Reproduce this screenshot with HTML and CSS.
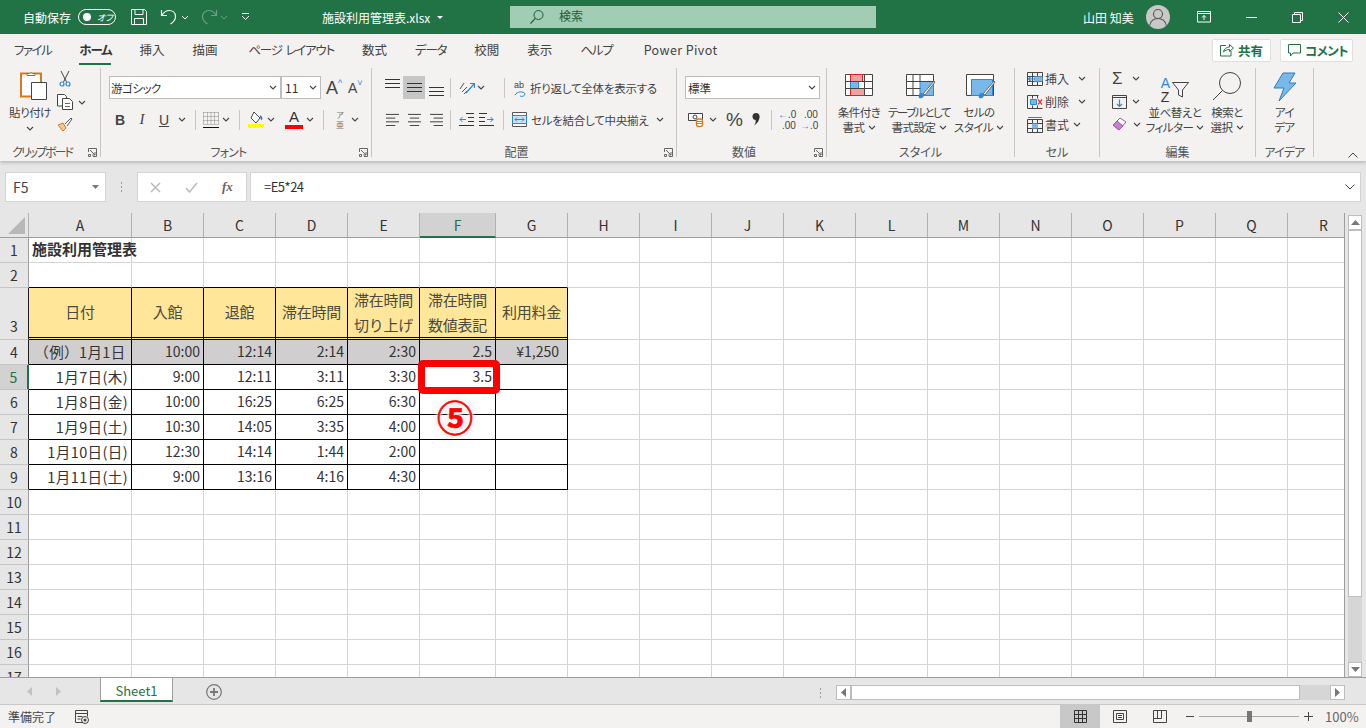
FILE: index.html
```html
<!DOCTYPE html>
<html lang="ja">
<head>
    <meta charset="UTF-8">
    <meta name="viewport" content="width=device-width, initial-scale=1.0">
    <title>施設利用管理表.xlsx - Excel</title>
    <link rel="stylesheet" href="styles.css">
</head>
<body>
    <svg class="defs" width="0" height="0">
        <symbol id="chev" viewBox="0 0 8 5"><path d="M1 1l3 3 3-3" fill="none" stroke="#444" stroke-width="1.1"/></symbol>
        <symbol id="launch" viewBox="0 0 9 9"><path d="M.5 4V.5h8v8H5M2 2l5 5M7 4v3H4M.5 6.500h2v2h-2z" fill="none" stroke="#666"/></symbol>
        <symbol id="lines-l" viewBox="0 0 16 14"><path d="M1 1.500h14M1 5.500h10M1 9.500h14M1 13.500h10" stroke="#333" fill="none"/></symbol>
        <symbol id="lines-c" viewBox="0 0 16 14"><path d="M1 1.500h14M3 5.500h10M1 9.500h14M3 13.500h10" stroke="#333" fill="none"/></symbol>
        <symbol id="lines-r" viewBox="0 0 16 14"><path d="M1 1.500h14M5 5.500h10M1 9.500h14M5 13.500h10" stroke="#333" fill="none"/></symbol>
    </svg>

    <!-- Title bar -->
    <header class="titlebar">
        <div class="qat">
            <span class="autosave">自動保存</span>
            <span class="toggle"><i></i><b>オフ</b></span>
            <svg class="qat-save" width="18" height="18" viewBox="0 0 18 18"><path d="M1.500 1.500h13l2 2v13h-15zM5 1.500v5h8v-5M4.500 16.500v-6h9v6" fill="none" stroke="#fff"/></svg>
            <svg class="qat-undo" width="18" height="18" viewBox="0 0 18 18"><path d="M1.500 2v5.500H7M2 7c2-3 4-4.500 7-4.500 4 0 6.500 2.500 6.500 6 0 3-2 5.500-5 7.500" fill="none" stroke="#fff" stroke-width="1.2"/></svg>
            <svg class="qat-chev" width="8" height="5"><path d="M1 1l3 3 3-3" fill="none" stroke="#fff"/></svg>
            <svg class="qat-redo" width="18" height="18" viewBox="0 0 18 18"><path d="M16.500 2v5.500H11M16 7c-2-3-4-4.500-7-4.500-4 0-6.500 2.500-6.500 6 0 3 2 5.500 5 7.500" fill="none" stroke="#6f9f88" stroke-width="1.2"/></svg>
            <svg class="qat-chev dim" width="8" height="5"><path d="M1 1l3 3 3-3" fill="none" stroke="#6f9f88"/></svg>
            <svg class="qat-more" width="9" height="8" viewBox="0 0 9 8"><path d="M1 .5h7M1 3l3.500 3.500L8 3" fill="none" stroke="#fff"/></svg>
        </div>
        <div class="filename">施設利用管理表.xlsx<svg width="6" height="3" viewBox="0 0 6 3"><path d="M0 0h6L3 3z" fill="#fff"/></svg></div>
        <div class="search">
            <svg width="16" height="16" viewBox="0 0 16 16"><circle cx="9.500" cy="6" r="4.500" fill="none" stroke="#1e5c3c"/><path d="M6.300 9.300L1.500 14.500" stroke="#1e5c3c" stroke-width="1.2"/></svg>
            <span>検索</span>
        </div>
        <div class="account">
            <span class="username">山田 知美</span>
            <span class="avatar"><svg width="24" height="24" viewBox="0 0 24 24"><circle cx="12" cy="9" r="4.500" fill="none" stroke="#555" stroke-width="1.1"/><path d="M3.500 21c1-5 4-7.500 8.500-7.500s7.500 2.500 8.500 7.500" fill="none" stroke="#555" stroke-width="1.1"/></svg></span>
        </div>
        <div class="winbtns">
            <svg width="14" height="12" viewBox="0 0 14 12"><path d="M.5 2.500V.5h13v10.500H.5zM.5 2.500h13M7 9V4.500M5 6.500l2-2 2 2" fill="none" stroke="#fff"/></svg>
            <svg width="11" height="1" viewBox="0 0 11 1"><path d="M0 .5h11" stroke="#fff"/></svg>
            <svg width="11" height="11" viewBox="0 0 11 11"><path d="M.5 2.500h8v8h-8zM2.500 2.500v-2h8v8h-2" fill="none" stroke="#fff"/></svg>
            <svg width="11" height="11" viewBox="0 0 11 11"><path d="M.5.5l10 10M10.500.5l-10 10" fill="none" stroke="#fff"/></svg>
        </div>
    </header>

    <!-- Tabs -->
    <nav class="tabs">
        <span class="kana wide">ファイル</span>
        <span class="kana active">ホーム</span>
        <span>挿入</span>
        <span>描画</span>
        <span class="kana page">ページ レイアウト</span>
        <span>数式</span>
        <span class="kana">データ</span>
        <span>校閲</span>
        <span>表示</span>
        <span class="kana">ヘルプ</span>
        <span class="latin">Power Pivot</span>
        <div class="share-btns">
            <button class="share">
                <svg width="14" height="14" viewBox="0 0 14 14"><path d="M6 2.500H.5V13H11V8M3.500 9c.5-3 3-5 6-5V1.500l4 3.500-4 3.500v-2c-2.500 0-4.500 1-6 2.500z" fill="none" stroke="#217346"/></svg>
                共有
            </button>
            <button class="share comment">
                <svg width="13" height="13" viewBox="0 0 13 13"><path d="M.5.5h12V9H5l-2.500 3V9h-2z" fill="none" stroke="#217346"/></svg>
                コメント
            </button>
        </div>
    </nav>

    <!-- Ribbon -->
    <section class="ribbon">
        <div class="group g-clip">
            <div class="group-body">
                <div class="paste">
                    <svg width="28" height="30" viewBox="0 0 28 30"><path d="M1 2.500h20v23H1z" fill="#fff" stroke="#d9791a" stroke-width="2"/><path d="M7 4.500v-2h2.500a2 2 0 0 1 3 0H15v2z" fill="#fff" stroke="#777"/><path d="M11.500 11.500h15v17h-15z" fill="#fff" stroke="#444"/></svg>
                    <span class="big-label">貼り付け</span>
                    <svg width="8" height="5"><use href="#chev"/></svg>
                </div>
                <div class="clip-col">
                    <svg width="12" height="17" viewBox="0 0 12 17"><path d="M2 1l5.500 11M10 1L4.500 12" fill="none" stroke="#444"/><circle cx="3" cy="14" r="2" fill="none" stroke="#2b88d8" stroke-width="1.2"/><circle cx="9" cy="14" r="2" fill="none" stroke="#2b88d8" stroke-width="1.2"/></svg>
                    <div class="clip-row">
                        <svg width="17" height="16" viewBox="0 0 17 16"><path d="M.5.5h7l2 2V12H.5z" fill="#fff" stroke="#444"/><path d="M5.500 4.500h7l3 3v8h-10z" fill="#fff" stroke="#444"/><path d="M8 9.500h5M8 12.500h5" stroke="#666"/></svg>
                        <svg width="8" height="5"><use href="#chev"/></svg>
                    </div>
                    <svg width="16" height="15" viewBox="0 0 16 15"><path d="M1 8l5 6 3-3-3-5z" fill="#f7c78c" stroke="#d9791a"/><path d="M8 7l6-6 1 1-5 7" fill="#fff" stroke="#555"/></svg>
                </div>
            </div>
            <div class="group-label">クリップボード</div>
            <svg class="launcher" width="9" height="9"><use href="#launch"/></svg>
        </div>

        <div class="group g-font">
            <div class="group-body column">
                <div class="tool-row">
                    <div class="select font-name">游ゴシック<svg width="8" height="5"><use href="#chev"/></svg></div>
                    <div class="select font-size">11<svg width="8" height="5"><use href="#chev"/></svg></div>
                    <span class="grow-a">A<sup>^</sup></span>
                    <span class="shrink-a">A<sup>˅</sup></span>
                </div>
                <div class="tool-row format-row">
                    <span class="fmt bold">B</span>
                    <span class="fmt italic">I</span>
                    <span class="fmt under">U</span>
                    <svg class="c" width="8" height="5"><use href="#chev"/></svg>
                    <i class="vsep s1"></i>
                    <svg class="ico-border" width="16" height="16" viewBox="0 0 16 16"><path d="M.5.5h15M.5 4.500h15M.5 8.500h15M.5 12.500h15M.5.5v12M4.500.5v12M8 .5v12M11.500.5v12M15.500.5v12" fill="none" stroke="#888" stroke-dasharray="1 1"/><path d="M0 15.500h16" stroke="#111"/></svg>
                    <svg class="c" width="8" height="5"><use href="#chev"/></svg>
                    <i class="vsep s2"></i>
                    <svg class="ico-fill" width="16" height="17" viewBox="0 0 16 17"><path d="M6 1l6 6-4 5-5-5z" fill="#fff" stroke="#444"/><path d="M12 4c2 1 3 3 2 5-1 0-2-2-2-5z" fill="#2b6cb0"/><path d="M0 13h16v4H0z" fill="#ff0"/></svg>
                    <svg class="c" width="8" height="5"><use href="#chev"/></svg>
                    <span class="ico-color">A<i></i></span>
                    <svg class="c" width="8" height="5"><use href="#chev"/></svg>
                    <i class="vsep s3"></i>
                    <span class="phonetic">ア<br>亜</span>
                    <svg class="c" width="8" height="5"><use href="#chev"/></svg>
                </div>
            </div>
            <div class="group-label kana-label">フォント</div>
            <svg class="launcher" width="9" height="9"><use href="#launch"/></svg>
        </div>

        <div class="group g-align">
            <div class="group-body column">
                <div class="tool-row">
                    <span class="al al-top"><svg width="15" height="9" viewBox="0 0 15 9"><path d="M0 .5h15M0 4.500h15M0 8.500h15" stroke="#333"/></svg></span>
                    <span class="al al-mid"><svg width="15" height="9" viewBox="0 0 15 9"><path d="M0 .5h15M0 4.500h15M0 8.500h15" stroke="#333"/></svg></span>
                    <span class="al al-bot"><svg width="15" height="9" viewBox="0 0 15 9"><path d="M0 .5h15M0 4.500h15M0 8.500h15" stroke="#333"/></svg></span>
                    <i class="vsep a1"></i>
                    <svg class="orient" width="16" height="14" viewBox="0 0 16 14"><path d="M1 8l4-6M3 11l5-5M5 13l3-3" stroke="#555" fill="none"/><path d="M7 12l8-9M11 2.500h4.500V7" stroke="#2b88d8" fill="none" stroke-width="1.2"/></svg>
                    <svg class="c" width="8" height="5"><use href="#chev"/></svg>
                    <i class="vsep a2"></i>
                    <svg class="ico-wrap" width="14" height="18" viewBox="0 0 14 18"><path d="M1 16c2-4 9-4 10-1 0 2-3 3-5 2" fill="none" stroke="#2b88d8"/><text x="0" y="9" class="ico-txt">ab</text></svg>
                    <span class="wrap-text">折り返して全体を表示する</span>
                </div>
                <div class="tool-row">
                    <span class="al"><svg width="15" height="13" viewBox="0 0 15 13"><use href="#lines-l"/></svg></span>
                    <span class="al"><svg width="15" height="13" viewBox="0 0 15 13"><use href="#lines-c"/></svg></span>
                    <span class="al"><svg width="15" height="13" viewBox="0 0 15 13"><use href="#lines-r"/></svg></span>
                    <i class="vsep a1"></i>
                    <svg class="indent-l" width="15" height="13" viewBox="0 0 15 13"><path d="M7 .5h8M9 4.500h6M9 8.500h6M0 12.500h15" stroke="#333"/><path d="M7 6.500H1M3.500 4L1 6.500 3.500 9" stroke="#2b88d8" fill="none"/></svg>
                    <svg class="indent-r" width="15" height="13" viewBox="0 0 15 13"><path d="M0 .5h8M0 4.500h6M0 8.500h6M0 12.500h15" stroke="#333"/><path d="M8 6.500h6M11.500 4L14 6.500 11.500 9" stroke="#2b88d8" fill="none"/></svg>
                    <i class="vsep a3"></i>
                    <svg class="ico-merge" width="15" height="15" viewBox="0 0 15 15"><path d="M.5.5h14v14H.5z" fill="#fff" stroke="#555"/><path d="M.5 3.500h14v8H.5z" fill="#cde3f5" stroke="#2b88d8"/><path d="M3 7.500h9M5 5.500l-2 2 2 2M10 5.500l2 2-2 2" stroke="#2b88d8" fill="none"/></svg>
                    <span class="merge-text">セルを結合して中央揃え</span>
                    <svg class="c" width="8" height="5"><use href="#chev"/></svg>
                </div>
            </div>
            <div class="group-label">配置</div>
            <svg class="launcher" width="9" height="9"><use href="#launch"/></svg>
        </div>

        <div class="group g-num">
            <div class="group-body column">
                <div class="tool-row">
                    <div class="select num-format">標準<svg width="8" height="5"><use href="#chev"/></svg></div>
                </div>
                <div class="tool-row num-row">
                    <svg class="ico-acct" width="16" height="15" viewBox="0 0 16 15"><path d="M.5 1.500h14v7H.5z" fill="#fff" stroke="#444"/><circle cx="7" cy="5" r="2" fill="none" stroke="#444"/><rect x="8.500" y="7" width="6" height="7.500" rx="2" fill="#fff" stroke="#d9791a" stroke-width="1.3"/><path d="M9 9.500h5M9 11.500h5" stroke="#d9791a"/></svg>
                    <svg class="c" width="8" height="5"><use href="#chev"/></svg>
                    <span class="pct">%</span>
                    <svg class="comma" width="8" height="13" viewBox="0 0 8 13"><circle cx="4" cy="3.500" r="3.500" fill="#333"/><path d="M7.500 3.500c0 4-2 7-5.500 9 1.500-2 2-4 1.500-6z" fill="#333"/></svg>
                    <i class="vsep n1"></i>
                    <span class="dec"><b>←</b>.0<br>.00</span>
                    <span class="dec d2">.00<br><b>→</b>.0</span>
                </div>
            </div>
            <div class="group-label">数値</div>
            <svg class="launcher" width="9" height="9"><use href="#launch"/></svg>
        </div>

        <div class="group g-style">
            <div class="group-body">
                <div class="big-btn w-cond">
                    <svg width="28" height="23" viewBox="0 0 28 23"><path d="M.5.5h27v21H.5z" fill="#fff" stroke="#444"/><path d="M5.500.5h12v7h-12zM5.500 14.500h14v7h-14z" fill="#f4a0a0" stroke="#d22"/><path d="M5.500 7.500h8v7h-8z" fill="#7ab8ea" stroke="#2b88d8"/><path d="M.5 7.500h27M.5 14.500h27M19.500.5v21" stroke="#444" fill="none"/></svg>
                    <span class="big-label">条件付き<br>書式<svg width="8" height="5"><use href="#chev"/></svg></span>
                </div>
                <div class="big-btn w-table">
                    <svg width="30" height="26" viewBox="0 0 30 26"><path d="M.5.5h27v21H.5z" fill="#fff" stroke="#444"/><path d="M14 7.500h13.500v14H14z" fill="#7ab8ea" stroke="#2b88d8"/><path d="M.5 7.500h27M.5 14.500h14M7 .5v21M14 .5v7" stroke="#444" fill="none"/><path d="M13 24c-1-3 1-5 3-5l2 2c0 2-2 4-5 3z" fill="#2b88d8"/><path d="M17 20L28 7l1 1-10 13z" fill="#fff" stroke="#666"/></svg>
                    <span class="big-label"><span class="squeeze">テーブルとして</span><br>書式設定<svg width="8" height="5"><use href="#chev"/></svg></span>
                </div>
                <div class="big-btn w-cell">
                    <svg width="30" height="26" viewBox="0 0 30 26"><path d="M.5.5h27v21H.5z" fill="#fff" stroke="#444"/><path d="M5.500 5.500h21v16h-21z" fill="#7ab8ea" stroke="#2b88d8"/><path d="M13 24c-1-3 1-5 3-5l2 2c0 2-2 4-5 3z" fill="#2b88d8"/><path d="M17 20L28 7l1 1-10 13z" fill="#fff" stroke="#666"/></svg>
                    <span class="big-label">セルの<br>スタイル<svg width="8" height="5"><use href="#chev"/></svg></span>
                </div>
            </div>
            <div class="group-label">スタイル</div>
        </div>

        <div class="group g-cells">
            <div class="group-body column tight">
                <div class="cell-row">
                    <svg width="16" height="14" viewBox="0 0 16 14"><path d="M.5.5h15v13H.5zM.5 4.500h15M.5 9.500h15M5.500.5v13M10.500.5v13" fill="none" stroke="#444"/><path d="M7 4.500h8.500v5H7z" fill="#7ab8ea"/><path d="M8 7H1.500M4 4.500L1.500 7 4 9.500" fill="none" stroke="#2b88d8" stroke-width="1.2"/></svg>
                    <span>挿入</span><svg width="8" height="5"><use href="#chev"/></svg>
                </div>
                <div class="cell-row">
                    <svg width="16" height="14" viewBox="0 0 16 14"><path d="M.5.5h11M.5 13.500h15M.5.5v13M5.500.5v3M5.500 10.500v3M10.500.5v3M10.500 10.500v3" fill="none" stroke="#444"/><path d="M3.500 4.500h6v5h-6z" fill="#7ab8ea" stroke="#2b88d8"/><path d="M11 4.500l4 5M15 4.500l-4 5" stroke="#e33" stroke-width="1.3"/></svg>
                    <span>削除</span><svg width="8" height="5"><use href="#chev"/></svg>
                </div>
                <div class="cell-row c3">
                    <svg width="16" height="16" viewBox="0 0 16 16"><path d="M.5 2.500h15v13H.5zM.5 6.500h15M.5 11.500h15M5.500 2.500v13M10.500 2.500v13" fill="none" stroke="#444"/><path d="M5 6.500h6v5H5z" fill="#7ab8ea"/><path d="M1 .5h14" stroke="#2b88d8"/></svg>
                    <span>書式</span><svg width="8" height="5"><use href="#chev"/></svg>
                </div>
            </div>
            <div class="group-label">セル</div>
        </div>

        <div class="group g-edit">
            <div class="group-body">
                <div class="edit-col">
                    <div class="edit-row"><span class="sigma">Σ</span><svg width="8" height="5"><use href="#chev"/></svg></div>
                    <div class="edit-row"><svg width="15" height="14" viewBox="0 0 15 14"><path d="M.5.5h14v13H.5zM.5 2.500h14" fill="none" stroke="#444"/><path d="M7.500 4.500v7M5 9l2.500 2.500L10 9" fill="none" stroke="#2b88d8" stroke-width="1.2"/></svg><svg width="8" height="5"><use href="#chev"/></svg></div>
                    <div class="edit-row"><svg width="16" height="15" viewBox="0 0 16 15"><path d="M1 8l7-7 6 4-7 8z" fill="#fff" stroke="#a94fb5"/><path d="M1 8l4-4 6 5-4 4z" fill="#c77fd0" stroke="#a94fb5"/></svg><svg width="8" height="5"><use href="#chev"/></svg></div>
                </div>
                <div class="big-btn w-sort">
                    <span class="sort-ico"><b class="az"><i>A</i><i>Z</i></b><svg width="17" height="16" viewBox="0 0 17 16"><path d="M.5.5h16l-6 7.500v7l-4-2V8z" fill="none" stroke="#444"/></svg></span>
                    <span class="big-label">並べ替えと<br>フィルター<svg width="8" height="5"><use href="#chev"/></svg></span>
                </div>
                <div class="big-btn w-find">
                    <svg width="30" height="30" viewBox="0 0 30 30"><circle cx="18" cy="12" r="10.500" fill="none" stroke="#444"/><path d="M10.500 19.500L1 29" stroke="#444"/></svg>
                    <span class="big-label">検索と<br>選択<svg width="8" height="5"><use href="#chev"/></svg></span>
                </div>
            </div>
            <div class="group-label">編集</div>
        </div>

        <div class="group g-idea">
            <div class="group-body">
                <div class="big-btn w-idea">
                    <svg width="24" height="30" viewBox="0 0 24 30"><path d="M10 1h12l-6 10h7L6 29l5-13H1z" fill="#7ab8ea" stroke="#2b7cc4"/></svg>
                    <span class="big-label">アイ<br>デア</span>
                </div>
            </div>
            <div class="group-label kana-label">アイデア</div>
        </div>

        <svg class="collapse" width="10" height="6" viewBox="0 0 10 6"><path d="M.5 5.500L5 1l4.500 4.500" fill="none" stroke="#444"/></svg>
    </section>

    <!-- Formula bar -->
    <section class="formula-bar">
        <div class="name-box">F5<svg width="7" height="4" viewBox="0 0 7 4"><path d="M0 0h7L3.500 4z" fill="#777"/></svg></div>
        <div class="dots"></div>
        <div class="fx-box">
            <svg width="11" height="11" viewBox="0 0 11 11"><path d="M1 1l9 9M10 1l-9 9" stroke="#bbb" stroke-width="1.5"/></svg>
            <svg width="13" height="11" viewBox="0 0 13 11"><path d="M1 6l3.500 4L12 1" fill="none" stroke="#bbb" stroke-width="1.5"/></svg>
            <span class="fx">fx</span>
        </div>
        <div class="formula-input">=E5*24<svg width="10" height="6" viewBox="0 0 10 6"><path d="M.5.5L5 5l4.500-4.500" fill="none" stroke="#444"/></svg></div>
    </section>

    <!-- Sheet -->
    <main class="sheet">
        <div class="grid-wrap">
            <table class="grid">
                <colgroup>
                    <col class="c-head"><col class="c-a"><col><col><col><col><col class="c-f"><col>
                    <col><col><col><col><col><col><col><col><col><col><col>
                </colgroup>
                <thead>
                    <tr>
                        <th class="corner"><i></i></th>
                        <th>A</th><th>B</th><th>C</th><th>D</th><th>E</th><th class="sel-col">F</th><th>G</th><th>H</th><th>I</th><th>J</th><th>K</th><th>L</th><th>M</th><th>N</th><th>O</th><th>P</th><th>Q</th><th>R</th>
                    </tr>
                </thead>
                <tbody>
                    <tr>
                        <th>1</th>
                        <td class="sheet-title">施設利用管理表</td><td></td><td></td><td></td><td></td><td></td><td></td><td></td><td></td><td></td><td></td><td></td><td></td><td></td><td></td><td></td><td></td><td></td>
                    </tr>
                    <tr>
                        <th>2</th>
                        <td class="bb"></td><td class="bb"></td><td class="bb"></td><td class="bb"></td><td class="bb"></td><td class="bb"></td><td class="bb"></td><td></td><td></td><td></td><td></td><td></td><td></td><td></td><td></td><td></td><td></td><td></td>
                    </tr>
                    <tr class="row-head">
                        <th class="bk">3</th>
                        <td class="hd">日付</td><td class="hd">入館</td><td class="hd">退館</td><td class="hd">滞在時間</td><td class="hd">滞在時間<br>切り上げ</td><td class="hd">滞在時間<br>数値表記</td><td class="hd">利用料金</td><td></td><td></td><td></td><td></td><td></td><td></td><td></td><td></td><td></td><td></td><td></td>
                    </tr>
                    <tr class="row-ex">
                        <th class="bk">4</th>
                        <td class="ex date mid">（例）1月1日</td><td class="ex n">10:00</td><td class="ex n">12:14</td><td class="ex n">2:14</td><td class="ex n">2:30</td><td class="ex n">2.5</td><td class="ex n yen">¥1,250</td><td></td><td></td><td></td><td></td><td></td><td></td><td></td><td></td><td></td><td></td><td></td>
                    </tr>
                    <tr>
                        <th class="sel-row">5</th>
                        <td class="d n date">1月7日(木)</td><td class="d n">9:00</td><td class="d n">12:11</td><td class="d n">3:11</td><td class="d n">3:30</td><td class="d n">3.5</td><td class="d"></td><td></td><td></td><td></td><td></td><td></td><td></td><td></td><td></td><td></td><td></td><td></td>
                    </tr>
                    <tr>
                        <th class="bk">6</th>
                        <td class="d n date">1月8日(金)</td><td class="d n">10:00</td><td class="d n">16:25</td><td class="d n">6:25</td><td class="d n">6:30</td><td class="d"></td><td class="d"></td><td></td><td></td><td></td><td></td><td></td><td></td><td></td><td></td><td></td><td></td><td></td>
                    </tr>
                    <tr>
                        <th class="bk">7</th>
                        <td class="d n date">1月9日(土)</td><td class="d n">10:30</td><td class="d n">14:05</td><td class="d n">3:35</td><td class="d n">4:00</td><td class="d"></td><td class="d"></td><td></td><td></td><td></td><td></td><td></td><td></td><td></td><td></td><td></td><td></td><td></td>
                    </tr>
                    <tr>
                        <th class="bk">8</th>
                        <td class="d n date">1月10日(日)</td><td class="d n">12:30</td><td class="d n">14:14</td><td class="d n">1:44</td><td class="d n">2:00</td><td class="d"></td><td class="d"></td><td></td><td></td><td></td><td></td><td></td><td></td><td></td><td></td><td></td><td></td><td></td>
                    </tr>
                    <tr>
                        <th class="bk">9</th>
                        <td class="d n date">1月11日(土)</td><td class="d n">9:00</td><td class="d n">13:16</td><td class="d n">4:16</td><td class="d n">4:30</td><td class="d"></td><td class="d"></td><td></td><td></td><td></td><td></td><td></td><td></td><td></td><td></td><td></td><td></td><td></td>
                    </tr>
                    <tr><th>10</th><td></td><td></td><td></td><td></td><td></td><td></td><td></td><td></td><td></td><td></td><td></td><td></td><td></td><td></td><td></td><td></td><td></td><td></td></tr>
                    <tr><th>11</th><td></td><td></td><td></td><td></td><td></td><td></td><td></td><td></td><td></td><td></td><td></td><td></td><td></td><td></td><td></td><td></td><td></td><td></td></tr>
                    <tr><th>12</th><td></td><td></td><td></td><td></td><td></td><td></td><td></td><td></td><td></td><td></td><td></td><td></td><td></td><td></td><td></td><td></td><td></td><td></td></tr>
                    <tr><th>13</th><td></td><td></td><td></td><td></td><td></td><td></td><td></td><td></td><td></td><td></td><td></td><td></td><td></td><td></td><td></td><td></td><td></td><td></td></tr>
                    <tr><th>14</th><td></td><td></td><td></td><td></td><td></td><td></td><td></td><td></td><td></td><td></td><td></td><td></td><td></td><td></td><td></td><td></td><td></td><td></td></tr>
                    <tr><th>15</th><td></td><td></td><td></td><td></td><td></td><td></td><td></td><td></td><td></td><td></td><td></td><td></td><td></td><td></td><td></td><td></td><td></td><td></td></tr>
                    <tr><th>16</th><td></td><td></td><td></td><td></td><td></td><td></td><td></td><td></td><td></td><td></td><td></td><td></td><td></td><td></td><td></td><td></td><td></td><td></td></tr>
                    <tr><th>17</th><td></td><td></td><td></td><td></td><td></td><td></td><td></td><td></td><td></td><td></td><td></td><td></td><td></td><td></td><td></td><td></td><td></td><td></td></tr>
                </tbody>
            </table>
            <div class="red-box"></div>
            <div class="step-no">⑤</div>
        </div>
        <div class="vscroll">
            <span class="sb-btn"><svg width="9" height="5" viewBox="0 0 9 5"><path d="M0 5h9L4.500 0z" fill="#777"/></svg></span>
            <span class="sb-thumb"></span>
            <span class="sb-rest"></span>
            <span class="sb-btn"><svg width="9" height="5" viewBox="0 0 9 5"><path d="M0 0h9L4.500 5z" fill="#777"/></svg></span>
        </div>
    </main>

    <!-- Sheet tabs -->
    <section class="tabbar">
        <div class="tab-nav">
            <svg width="5" height="9" viewBox="0 0 5 9"><path d="M5 0v9L0 4.500z" fill="#c2c2c2"/></svg>
            <svg width="5" height="9" viewBox="0 0 5 9"><path d="M0 0v9l5-4.500z" fill="#c2c2c2"/></svg>
        </div>
        <div class="sheet-tab">Sheet1</div>
        <svg class="add-sheet" width="16" height="16" viewBox="0 0 16 16"><circle cx="8" cy="8" r="7.300" fill="none" stroke="#777" stroke-width="1.2"/><path d="M8 4v8M4 8h8" stroke="#777" stroke-width="1.8"/></svg>
        <div class="hscroll">
            <span class="dots h"></span>
            <span class="sb-btn"><svg width="5" height="9" viewBox="0 0 5 9"><path d="M5 0v9L0 4.500z" fill="#777"/></svg></span>
            <span class="h-thumb"></span>
            <span class="h-rest"></span>
            <span class="sb-btn"><svg width="5" height="9" viewBox="0 0 5 9"><path d="M0 0v9l5-4.500z" fill="#777"/></svg></span>
        </div>
    </section>

    <!-- Status bar -->
    <footer class="statusbar">
        <span class="ready">準備完了</span>
        <svg class="macro" width="14" height="14" viewBox="0 0 14 14"><path d="M8 12.500H.5V.5h12v6M.5 3.500h12M2.500 6.500h5M2.500 9h3" fill="none" stroke="#444"/><circle cx="10" cy="10" r="3.500" fill="none" stroke="#444"/><circle cx="10" cy="10" r="1.500" fill="#444"/></svg>
        <div class="views">
            <span class="view on"><svg width="13" height="13" viewBox="0 0 13 13"><path d="M.5.5h12v12H.5zM4.500.5v12M8.500.5v12M.5 4.500h12M.5 8.500h12" fill="none" stroke="#333"/></svg></span>
            <span class="view"><svg width="14" height="13" viewBox="0 0 14 13"><path d="M.5.5h13v12H.5zM3.500 3.500h7v6h-7zM5 5.500h4M5 7.500h4" fill="none" stroke="#444"/></svg></span>
            <span class="view"><svg width="14" height="13" viewBox="0 0 14 13"><path d="M.5 8.500V.5h13v12H.5v-4h8V.5M4.500.5v8" fill="none" stroke="#444"/></svg></span>
        </div>
        <div class="zoom">
            <i class="minus"></i>
            <span class="slider"><b></b></span>
            <i class="plus"></i>
            <span class="pct-text">100%</span>
        </div>
    </footer>
</body>
</html>
```

FILE: styles.css
```css
* {
    box-sizing: border-box;
}
html, body {
    height: 100%;
}
body {
    margin: 0;
    width: 1366px;
    height: 728px;
    overflow: hidden;
    display: flex;
    flex-direction: column;
    background-color: #e6e6e6;
    color: #333;
    font-family: "Noto Sans CJK JP", "Noto Sans", sans-serif;
    font-size: 12px;
    font-feature-settings: "palt";
}
.defs {
    position: absolute;
}
svg {
    flex: none;
}
i {
    font-style: normal;
}

/* title bar */
.titlebar {
    height: 34px;
    flex: none;
    display: flex;
    align-items: center;
    background-color: #217346;
    color: #fff;
    position: relative;
}
.qat {
    display: flex;
    align-items: center;
    width: 322px;
    padding-left: 23px;
}
.autosave {
    font-size: 12px;
    width: 55px;
}
.toggle {
    width: 38px;
    height: 16px;
    border: 1px solid #fff;
    border-radius: 8px;
    display: flex;
    align-items: center;
    padding-left: 4px;
}
.toggle i {
    width: 8px;
    height: 8px;
    background-color: #fff;
    border-radius: 50%;
}
.toggle b {
    font-size: 9px;
    font-weight: 400;
    font-style: italic;
    margin-left: 6px;
}
.qat-save {
    margin-left: 14px;
}
.qat-undo {
    margin-left: 12px;
}
.qat-chev {
    margin-left: 3px;
}
.qat-redo {
    margin-left: 11px;
}
.qat-chev.dim {
    margin-left: 2px;
}
.qat-more {
    margin-left: 13px;
}
.filename {
    width: 188px;
    font-size: 12px;
    display: flex;
    align-items: center;
    gap: 7px;
    white-space: nowrap;
}
.search {
    width: 366px;
    height: 22px;
    background-color: #a0cdb4;
    color: #1e5c3c;
    display: flex;
    align-items: center;
    padding-left: 19px;
    gap: 14px;
    font-size: 12px;
    line-height: 20px;
}
.search span {
    margin-top: -2px;
}
.account {
    margin-left: 207px;
    display: flex;
    align-items: center;
    gap: 12px;
}
.username {
    font-size: 12px;
}
.avatar {
    width: 24px;
    height: 24px;
    background-color: #c8c8c8;
    border-radius: 50%;
    overflow: hidden;
}
.winbtns {
    display: flex;
    align-items: center;
    margin-left: 27px;
}
.winbtns svg + svg {
    margin-left: 35px;
}

/* tabs */
.tabs {
    height: 32px;
    flex: none;
    display: flex;
    align-items: center;
    background-color: #f3f2f1;
    padding-left: 14px;
    gap: 28px;
    font-size: 12.5px;
    color: #444;
    position: relative;
}
.tabs > span {
    white-space: nowrap;
    position: relative;
    line-height: 30px;
}
.tabs .kana {
    letter-spacing: -1.2px;
}
.tabs .kana.wide {
    letter-spacing: -1.5px;
}
.tabs .page {
    margin-left: 3px;
    word-spacing: 2px;
}
.tabs .latin {
    letter-spacing: .4px;
    margin-left: 3px;
}
.tabs .active {
    font-weight: 700;
    color: #333;
}
.tabs .active::after {
    content: "";
    position: absolute;
    left: 0;
    right: 0;
    bottom: 0;
    height: 2px;
    background-color: #217346;
}
.share-btns {
    margin-left: auto;
    display: flex;
    gap: 9px;
    padding-right: 13px;
}
.share {
    height: 23px;
    width: 59px;
    background-color: #fff;
    border: 1px solid #e1dfdd;
    border-radius: 2px;
    color: #217346;
    font-family: inherit;
    font-feature-settings: inherit;
    font-size: 12.5px;
    font-weight: 700;
    display: flex;
    align-items: center;
    gap: 4px;
    padding: 0 0 0 7px;
    white-space: nowrap;
}
.comment {
    width: 73px;
    letter-spacing: -.6px;
}

/* ribbon */
.ribbon {
    height: 95px;
    flex: none;
    display: flex;
    background-color: #f3f2f1;
    position: relative;
    padding-top: 2px;
    box-shadow: 0 2px 3px rgba(0, 0, 0, .18);
    z-index: 1;
}
.group {
    position: relative;
    height: 89px;
    border-right: 1px solid #c8c6c4;
    display: flex;
    flex-direction: column;
    flex: none;
}
.group-body {
    flex: 1;
    display: flex;
    min-height: 0;
}
.group-body.column {
    flex-direction: column;
    padding-top: 8px;
}
.group-label {
    height: 10px;
    line-height: 10px;
    text-align: center;
    font-size: 12px;
    color: #555;
    white-space: nowrap;
}
.kana-label {
    letter-spacing: -.8px;
}
.g-font .group-label, .g-align .group-label, .g-num .group-label {
    padding-right: 15px;
}
.g-clip .group-label {
    text-align: left;
    padding-left: 12px;
    letter-spacing: -2px;
}
.launcher {
    position: absolute;
    right: 3px;
    bottom: 0;
}
.big-label {
    font-size: 11.5px;
    line-height: 15px;
    letter-spacing: -.5px;
    text-align: center;
    white-space: nowrap;
    color: #444;
}
.big-label svg {
    margin-left: 3px;
    vertical-align: 2px;
}
.squeeze {
    letter-spacing: -1.4px;
}
.tool-row {
    display: flex;
    align-items: center;
    height: 23px;
}
.g-clip {
    width: 101px;
}
.g-font {
    width: 271px;
}
.g-align {
    width: 305px;
}
.g-num {
    width: 150px;
}
.g-style {
    width: 188px;
}
.g-cells {
    width: 85px;
}
.g-edit {
    width: 156px;
}
.g-idea {
    width: 58px;
}
.paste {
    width: 62px;
    display: flex;
    flex-direction: column;
    align-items: center;
    padding-top: 3px;
    padding-right: 2px;
}
.paste > svg:first-child {
    margin-left: 7px;
}
.paste .big-label {
    margin-top: 4px;
    margin-bottom: 6px;
}
.clip-col {
    display: flex;
    flex-direction: column;
    align-items: flex-start;
    gap: 7px;
    padding-top: 2px;
    margin-left: -5px;
}
.clip-col > svg:first-child {
    margin-left: 2px;
}
.clip-row {
    display: flex;
    align-items: center;
    gap: 4px;
}
.select {
    height: 23px;
    background-color: #fff;
    border: 1px solid #bdbdbd;
    display: flex;
    align-items: center;
    justify-content: space-between;
    padding: 0 3px 0 2px;
    font-size: 11.5px;
    color: #333;
}
.font-name {
    width: 172px;
    margin-left: 8px;
    padding: 0 3px 0 1px;
    letter-spacing: -.5px;
}
.font-size {
    width: 40px;
    font-size: 12px;
    padding-left: 3px;
}
.grow-a, .shrink-a {
    font-size: 18px;
    line-height: 22px;
    color: #444;
    margin-left: 5px;
    font-family: "Liberation Sans", sans-serif;
    display: flex;
    width: 19px;
}
.shrink-a {
    font-size: 14px;
    margin-left: 3px;
}
.grow-a sup, .shrink-a sup {
    font-size: 9px;
    line-height: 12px;
    color: #2b88d8;
}
.format-row {
    margin-top: 9px;
    padding-left: 8px;
}
.format-row .c {
    margin-left: 3px;
}
.fmt {
    width: 22px;
    text-align: center;
    font-size: 15px;
    color: #444;
    font-family: "Liberation Serif", serif;
}
.bold {
    font-weight: 700;
    font-family: "Liberation Sans", sans-serif;
    font-size: 14px;
}
.italic {
    font-style: italic;
}
.under {
    text-decoration: underline;
    font-family: "Liberation Sans", sans-serif;
    font-size: 14px;
}
.vsep {
    width: 1px;
    height: 20px;
    background-color: #c8c6c4;
    flex: none;
}
.s1 {
    margin: 0 7px 0 9px;
}
.s2 {
    margin: 0 8px 0 9px;
}
.s3 {
    margin: 0 8px 0 9px;
}
.ico-color {
    width: 18px;
    margin-left: 10px;
    font-family: "Liberation Sans", sans-serif;
    font-size: 15px;
    line-height: 14px;
    text-align: center;
    display: block;
}
.ico-color i {
    display: block;
    height: 4px;
    background-color: #f00;
    margin-top: 1px;
}
.phonetic {
    width: 16px;
    font-size: 8px;
    line-height: 10px;
    text-align: center;
    color: #777;
}
.al {
    width: 22px;
    height: 23px;
    display: flex;
    justify-content: center;
    align-items: center;
}
.g-align .tool-row {
    padding-left: 9px;
}
.g-align .tool-row + .tool-row {
    margin-top: 9px;
}
.al-top {
    align-items: flex-start;
    padding-top: 3px;
}
.al-mid {
    background-color: #c6c6c6;
}
.al-bot {
    align-items: flex-end;
    padding-bottom: 3px;
}
.a1 {
    margin: 0 8px 0 3px;
}
.a2 {
    margin: 0 9px 0 19px;
}
.a3 {
    margin: 0 8px 0 9px;
}
.orient + .c {
    margin-left: 2px;
}
.indent-r {
    margin-left: 5px;
}
.ico-txt {
    font-family: "Liberation Sans", sans-serif;
    font-size: 9px;
    fill: #444;
}
.wrap-text, .merge-text {
    font-size: 11.5px;
    margin-left: 2px;
    letter-spacing: -.25px;
    white-space: nowrap;
    color: #444;
}
.merge-text {
    margin-left: 4px;
    width: 122px;
}
.merge-text + .c {
    margin-left: 3px;
}
.num-format {
    width: 135px;
    margin-left: 8px;
}
.num-row {
    margin-top: 9px;
    padding-left: 11px;
}
.num-row .c {
    margin-left: 5px;
}
.pct {
    font-family: "Liberation Sans", sans-serif;
    font-size: 19px;
    margin-left: 9px;
    color: #444;
}
.comma {
    margin-left: 9px;
}
.n1 {
    margin: 0 6px 0 11px;
}
.dec {
    font-family: "Liberation Sans", sans-serif;
    font-size: 10px;
    line-height: 11px;
    width: 18px;
    text-align: right;
    color: #444;
    white-space: nowrap;
}
.dec b {
    color: #2b88d8;
    font-weight: 400;
}
.d2 {
    margin-left: 4px;
}
.big-btn {
    display: flex;
    flex-direction: column;
    align-items: center;
    justify-content: flex-start;
    padding-top: 6px;
}
.w-cond {
    width: 60px;
    margin-left: 2px;
}
.w-cond .big-label {
    margin-top: 8px;
}
.w-table, .w-cell {
    width: 60px;
}
.w-table svg:first-child, .w-cell svg:first-child {
    margin-left: 3px;
}
.w-table .big-label, .w-cell .big-label {
    margin-top: 5px;
}
.group-body.tight {
    padding-top: 0;
    margin-top: -1px;
}
.cell-row {
    display: flex;
    align-items: center;
    height: 23px;
    padding-left: 12px;
    font-size: 12px;
    color: #444;
}
.cell-row span {
    margin-left: 2px;
    width: 33px;
}
.c3 span {
    width: 28px;
}
.edit-col {
    width: 48px;
    margin-top: -1px;
    padding: 0 0 0 12px;
    display: flex;
    flex-direction: column;
}
.edit-row {
    height: 23px;
    display: flex;
    align-items: center;
    gap: 5px;
    width: 40px;
}
.sigma {
    font-family: "Liberation Sans", sans-serif;
    font-size: 17px;
    width: 15px;
    color: #444;
}
.w-sort {
    width: 56px;
    margin-left: -1px;
}
.w-sort .big-label {
    margin-top: 1px;
}
.sort-ico {
    display: flex;
    height: 30px;
    align-items: flex-end;
    gap: 2px;
}
.sort-ico svg {
    margin-bottom: 6px;
}
.az {
    display: flex;
    flex-direction: column;
    font-family: "Liberation Sans", sans-serif;
    font-weight: 400;
    font-size: 14px;
    line-height: 14px;
}
.az i:first-child {
    color: #2b88d8;
}
.w-find {
    width: 48px;
    padding-top: 3px;
}
.w-find .big-label {
    margin-top: 4px;
}
.w-idea {
    width: 58px;
    padding-top: 4px;
}
.w-idea .big-label {
    margin-top: 3px;
}
.collapse {
    position: absolute;
    right: 8px;
    bottom: 3px;
}

/* formula bar */
.formula-bar {
    height: 52px;
    flex: none;
    display: flex;
    align-items: flex-start;
    padding: 11px 5px 0;
    background-color: #e6e6e6;
}
.name-box, .fx-box, .formula-input {
    height: 30px;
    background-color: #fff;
    border: 1px solid #d4d4d4;
    display: flex;
    align-items: center;
}
.name-box {
    width: 101px;
    justify-content: space-between;
    padding: 0 6px 0 7px;
    font-size: 14px;
    color: #444;
}
.dots {
    width: 31px;
    height: 10px;
    margin-top: 10px;
    background-image: radial-gradient(#9a9a9a 1px, transparent 1px);
    background-size: 3px 4px;
    background-position: center;
    background-repeat: repeat-y;
}
.fx-box {
    width: 110px;
    padding-left: 12px;
    gap: 24px;
}
.fx {
    font-family: "Liberation Serif", serif;
    font-style: italic;
    font-weight: 700;
    font-size: 13px;
    color: #666;
}
.formula-input {
    flex: 1;
    margin-left: 3px;
    padding: 0 5px 2px 13px;
    justify-content: space-between;
    font-size: 13px;
    letter-spacing: -.5px;
    color: #333;
}
.formula-input svg {
    margin-top: 2px;
}

/* sheet */
.sheet {
    flex: none;
    height: 465px;
    display: flex;
    background-color: #fff;
    border-bottom: 1px solid #9e9e9e;
}
.grid-wrap {
    width: 1345px;
    height: 464px;
    overflow: hidden;
    position: relative;
    border-right: 1px solid #9e9e9e;
}
.grid {
    table-layout: fixed;
    border-collapse: separate;
    border-spacing: 0;
    width: 1344px;
    font-size: 14px;
    color: #333;
    font-feature-settings: normal;
}
.grid col {
    width: 72px;
}
.grid col.c-head {
    width: 29px;
}
.grid col.c-a {
    width: 103px;
}
.grid col.c-f {
    width: 76px;
}
.grid tr {
    height: 25px;
}
.grid thead th {
    background-color: #e6e6e6;
    border-right: 1px solid #b1b1b1;
    border-bottom: 1px solid #9e9e9e;
    font-weight: 400;
    font-size: 14px;
    color: #333;
    padding: 0;
    line-height: 20px;
}
.grid .corner {
    position: relative;
}
.corner i {
    position: absolute;
    right: 3px;
    bottom: 3px;
    border-left: 17px solid transparent;
    border-bottom: 17px solid #b8b8b8;
}
.grid thead th.sel-col {
    background-color: #d2d2d2;
    color: #217346;
    border-bottom: 2px solid #217346;
}
.grid tbody th {
    background-color: #e6e6e6;
    border-right: 1px solid #9e9e9e;
    border-bottom: 1px solid #c4c4c4;
    font-weight: 400;
    font-size: 14px;
    color: #333;
    padding: 0;
}
.grid tbody th.bk {
    border-right-color: #222;
}
.grid .row-head th {
    vertical-align: bottom;
    padding-bottom: 3px;
}
.grid tbody th.sel-row {
    background-color: #d2d2d2;
    color: #217346;
    border-right: 2px solid #217346;
}
.grid td {
    border-right: 1px solid #d4d4d4;
    border-bottom: 1px solid #d4d4d4;
    padding: 0 3px;
    white-space: nowrap;
    overflow: hidden;
}
.grid td.sheet-title {
    font-weight: 700;
    font-size: 15px;
    overflow: visible;
    padding-bottom: 3px;
}
.grid td.bb {
    border-bottom-color: #000;
}
.grid .row-head {
    height: 52px;
}
.grid td.hd {
    background-color: #ffe699;
    border-right-color: #000;
    border-bottom: 3px double #000;
    text-align: center;
    font-size: 15px;
    color: #4a4a40;
    line-height: 24.5px;
    padding: 0;
    letter-spacing: -.2px;
}
.grid td.ex {
    background-color: #d0cece;
    border-right-color: #000;
    border-bottom-color: #000;
    padding-bottom: 2px;
}
.grid td.d {
    border-right-color: #000;
    border-bottom-color: #000;
    padding-bottom: 2px;
}
.grid td.n {
    text-align: right;
}
.grid td.mid {
    text-align: center;
}
.grid td.date {
    font-size: 14.5px;
    letter-spacing: .4px;
}
.grid td.yen {
    padding-right: 8px;
}
.red-box {
    position: absolute;
    left: 418px;
    top: 147px;
    width: 82px;
    height: 34px;
    border: 7px solid #f00;
    border-radius: 5px;
}
.step-no {
    position: absolute;
    left: 431px;
    top: 178px;
    width: 48px;
    height: 52px;
    line-height: 50px;
    text-align: center;
    font-size: 36px;
    font-weight: 700;
    color: #f00;
    -webkit-text-stroke: .7px #f00;
    text-shadow: 0 0 3px #fff, 0 0 3px #fff, 0 0 4px #fff, 0 0 5px #fff, 0 0 6px rgba(0, 0, 0, .3);
}

/* scroll bars */
.vscroll {
    width: 21px;
    display: flex;
    flex-direction: column;
    background-color: #e6e6e6;
    padding: 2px 4px 0 3px;
}
.sb-btn {
    height: 15px;
    flex: none;
    background-color: #fff;
    border: 1px solid #bdbdbd;
    display: flex;
    align-items: center;
    justify-content: center;
}
.sb-thumb {
    height: 367px;
    background-color: #fff;
    border: 1px solid #bdbdbd;
}
.sb-rest {
    flex: 1;
    background-color: #d6d6d6;
}

/* sheet tab bar */
.tabbar {
    height: 27px;
    flex: none;
    display: flex;
    align-items: flex-start;
    background-color: #e6e6e6;
    border-bottom: 1px solid #c8c8c8;
}
.tab-nav {
    width: 100px;
    height: 26px;
    display: flex;
    align-items: center;
    padding-left: 27px;
    gap: 24px;
}
.sheet-tab {
    width: 73px;
    height: 24px;
    background-color: #fff;
    border: 1px solid #9e9e9e;
    border-top: none;
    border-bottom: 2px solid #217346;
    text-align: center;
    padding-top: 2px;
    line-height: 22px;
    font-size: 13px;
    color: #217346;
}
.add-sheet {
    margin: 6px 0 0 33px;
}
.hscroll {
    margin-left: auto;
    width: 541px;
    height: 15px;
    margin-top: 7px;
    margin-right: 21px;
    display: flex;
}
.hscroll .sb-btn {
    width: 15px;
    height: 15px;
}
.dots.h {
    width: 32px;
    height: 10px;
    margin-top: 3px;
}
.h-thumb {
    width: 449px;
    background-color: #fff;
    border: 1px solid #bdbdbd;
}
.h-rest {
    flex: 1;
    background-color: #d6d6d6;
}

/* status bar */
.statusbar {
    flex: 1;
    display: flex;
    align-items: center;
    background-color: #f3f2f1;
    font-size: 12px;
    color: #444;
}
.ready {
    margin-left: 8px;
    width: 67px;
}
.views {
    margin-left: auto;
    display: flex;
    height: 100%;
}
.view {
    width: 40px;
    display: flex;
    align-items: center;
    justify-content: center;
}
.view.on {
    background-color: #c8c8c8;
}
.zoom {
    display: flex;
    align-items: center;
    width: 186px;
    padding-left: 6px;
}
.minus {
    width: 8px;
    height: 1px;
    background-color: #444;
}
.slider {
    width: 100px;
    height: 1px;
    background-color: #a8a8a8;
    margin-left: 5px;
    position: relative;
}
.slider b {
    position: absolute;
    left: 48px;
    top: -5px;
    width: 5px;
    height: 11px;
    background-color: #777;
}
.plus {
    width: 9px;
    height: 9px;
    margin-left: 5px;
    background-image: linear-gradient(#444, #444), linear-gradient(#444, #444);
    background-size: 9px 1px, 1px 9px;
    background-position: center;
    background-repeat: no-repeat;
}
.pct-text {
    margin-left: 12px;
    font-size: 13px;
    color: #666;
}
```
